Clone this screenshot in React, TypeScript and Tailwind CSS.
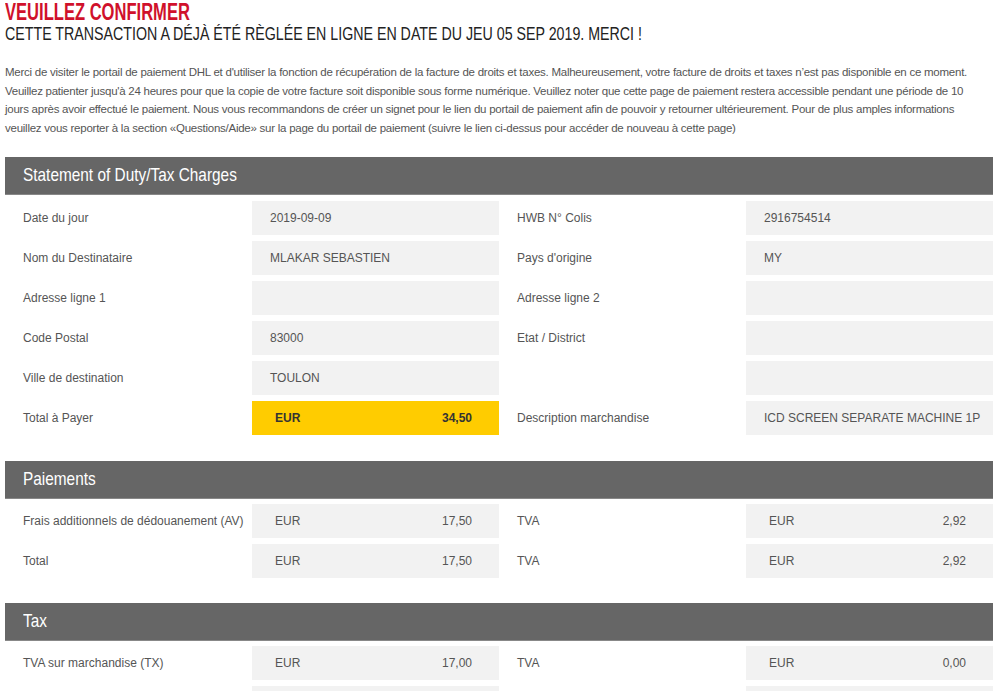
import React from "react";

type Cell = { label: string; value?: string; cur?: string; amt?: string; yellow?: boolean } | null;

const Field = ({ c }: { c: Cell }) => {
  if (!c) return <div className="flex h-[34px] items-center" />;
  return (
    <div className="flex h-[34px] items-center">
      <div className="w-[247px] pl-[18px] text-[12px] text-[#555]">{c.label}</div>
      {c.yellow ? (
        <div className="flex h-[34px] w-[247px] items-center justify-between bg-[#ffcc00] pl-[23px] pr-[27px] text-[12px] font-bold text-[#333]">
          <span>{c.cur}</span>
          <span>{c.amt}</span>
        </div>
      ) : c.cur ? (
        <div className="flex h-[34px] w-[247px] items-center justify-between bg-[#f2f2f2] pl-[23px] pr-[27px] text-[12px] text-[#555]">
          <span>{c.cur}</span>
          <span>{c.amt}</span>
        </div>
      ) : (
        <div className="flex h-[34px] w-[247px] items-center bg-[#f2f2f2] pl-[18px] text-[12px] text-[#555]">{c.value}</div>
      )}
    </div>
  );
};

const EmptyBoxRight = () => (
  <div className="flex h-[34px] items-center">
    <div className="w-[247px]" />
    <div className="h-[34px] w-[247px] bg-[#f2f2f2]" />
  </div>
);

const Header = ({ title }: { title: string }) => (
  <div className="flex h-[38px] items-center bg-[#666] pl-[18px] border-b border-[#888]">
    <span className="inline-block origin-left scale-x-[0.81] text-[19px] text-white whitespace-nowrap">{title}</span>
  </div>
);

const Section = ({ title, rows, first }: { title: string; rows: [Cell, Cell | "empty"][]; first?: boolean }) => (
  <div className={first ? "mb-[26px]" : "mb-[25px]"}>
    <Header title={title} />
    <div className={first ? "mt-[6px] flex flex-col gap-[6px]" : "mt-[5px] flex flex-col gap-[6px]"}>
      {rows.map((r, i) => (
        <div key={i} className="grid grid-cols-2">
          <Field c={r[0]} />
          {r[1] === "empty" ? <EmptyBoxRight /> : <Field c={r[1]} />}
        </div>
      ))}
    </div>
  </div>
);

export default function App() {
  return (
    <div className="h-[691px] w-[1000px] overflow-hidden bg-white px-[5px] font-['Liberation_Sans',Arial,sans-serif]">
      <div className="pt-[1px]">
        <div className="h-[22px] whitespace-nowrap">
          <span className="inline-block origin-left scale-x-[0.72] text-[23px] font-bold leading-[22px] text-[#d0112b]">VEUILLEZ CONFIRMER</span>
        </div>
        <div className="h-[22px] whitespace-nowrap">
          <span className="inline-block origin-left scale-x-[0.79] text-[18px] leading-[22px] text-[#222]">
            CETTE TRANSACTION A DÉJÀ ÉTÉ RÈGLÉE EN LIGNE EN DATE DU JEU 05 SEP 2019. MERCI !
          </span>
        </div>
      </div>
      <p className="mt-[18px] whitespace-nowrap text-[11.5px] leading-[18.5px] tracking-[-0.25px] text-[#555]">
        Merci de visiter le portail de paiement DHL et d'utiliser la fonction de récupération de la facture de droits et taxes. Malheureusement, votre facture de droits et taxes n’est pas disponible en ce moment.
        <br />
        Veuillez patienter jusqu'à 24 heures pour que la copie de votre facture soit disponible sous forme numérique. Veuillez noter que cette page de paiement restera accessible pendant une période de 10
        <br />
        jours après avoir effectué le paiement. Nous vous recommandons de créer un signet pour le lien du portail de paiement afin de pouvoir y retourner ultérieurement. Pour de plus amples informations
        <br />
        veuillez vous reporter à la section «Questions/Aide» sur la page du portail de paiement (suivre le lien ci-dessus pour accéder de nouveau à cette page)
      </p>
      <div className="mt-[20px] w-[988px]">
        <Section
          first
          title="Statement of Duty/Tax Charges"
          rows={[
            [{ label: "Date du jour", value: "2019-09-09" }, { label: "HWB N° Colis", value: "2916754514" }],
            [{ label: "Nom du Destinataire", value: "MLAKAR SEBASTIEN" }, { label: "Pays d'origine", value: "MY" }],
            [{ label: "Adresse ligne 1", value: "" }, { label: "Adresse ligne 2", value: "" }],
            [{ label: "Code Postal", value: "83000" }, { label: "Etat / District", value: "" }],
            [{ label: "Ville de destination", value: "TOULON" }, "empty"],
            [
              { label: "Total à Payer", cur: "EUR", amt: "34,50", yellow: true },
              { label: "Description marchandise", value: "ICD SCREEN SEPARATE MACHINE 1P" },
            ],
          ]}
        />
        <Section
          title="Paiements"
          rows={[
            [
              { label: "Frais additionnels de dédouanement (AV)", cur: "EUR", amt: "17,50" },
              { label: "TVA", cur: "EUR", amt: "2,92" },
            ],
            [{ label: "Total", cur: "EUR", amt: "17,50" }, { label: "TVA", cur: "EUR", amt: "2,92" }],
          ]}
        />
        <Section
          title="Tax"
          rows={[
            [
              { label: "TVA sur marchandise (TX)", cur: "EUR", amt: "17,00" },
              { label: "TVA", cur: "EUR", amt: "0,00" },
            ],
            [{ label: "Total", cur: "EUR", amt: "17,00" }, { label: "TVA", cur: "EUR", amt: "0,00" }],
          ]}
        />
      </div>
    </div>
  );
}
